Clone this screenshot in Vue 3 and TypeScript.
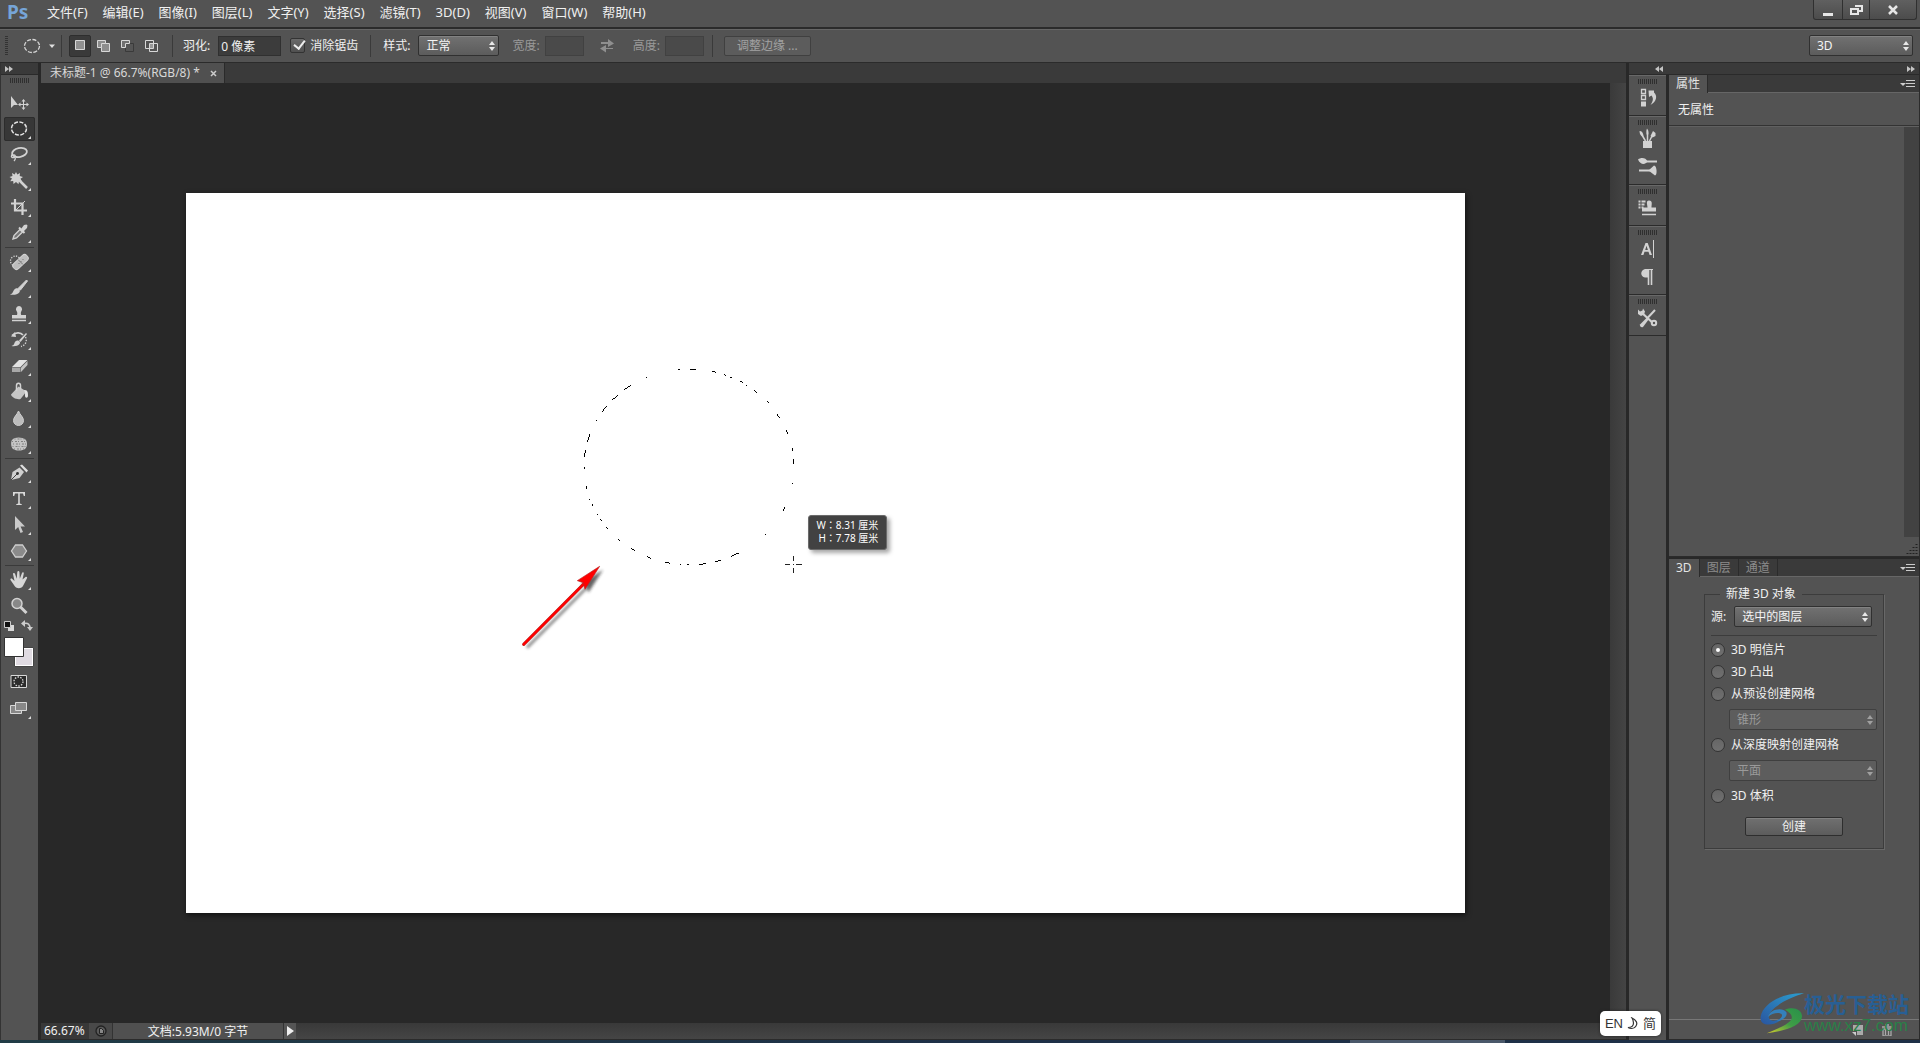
<script setup lang="ts">
import { ref } from 'vue'

interface Tool {
  name: string
  svg: string
  flyout: boolean
}

const menus: string[] = ['文件(F)', '编辑(E)', '图像(I)', '图层(L)', '文字(Y)', '选择(S)', '滤镜(T)', '3D(D)', '视图(V)', '窗口(W)', '帮助(H)']

const L = '#d2d2d2'
const tool = (name: string, svg: string, flyout = true): Tool => ({ name, svg, flyout })

const toolGroups: Tool[][] = [
  [
    tool('移动', `<path d="M7 5v12l3-3h4z" fill="${L}"/><path d="M19.500 9v9M15 13.500h9" stroke="${L}"/><path d="M17.500 10.500l2-2.500 2 2.500zM17.500 16.500l2 2.500 2-2.500zM16.500 11.500L14 13.500l2.500 2zM22.500 11.500l2.500 2-2.500 2z" fill="${L}"/>`, false),
    tool('椭圆选框', `<ellipse cx="15" cy="11.500" rx="7.500" ry="6.500" fill="none" stroke="#e4e4e4" stroke-width="1.500" stroke-dasharray="4 1.500"/>`),
    tool('套索', `<ellipse cx="15.500" cy="9.500" rx="7.500" ry="4.500" transform="rotate(-12 15.500 9.500)" fill="none" stroke="${L}" stroke-width="1.800"/><path d="M9 11c-2.500 1.500-2 4 .5 3.500s2-3 0-2.500M10 14c2 1 1.500 2.500 0 4" fill="none" stroke="${L}" stroke-width="1.300"/>`),
    tool('魔棒', `<path d="M15 11l8 8" stroke="${L}" stroke-width="2.500"/><path d="M12 3l1.300 2.500L16 4l-.3 3L19 8l-2.500 1.700L18 12.500l-3-.2-.5 3L12 13l-2.500 2-.3-3-3 .3L8 9.500 5.500 8l3-1L8 4l2.700 1.500z" fill="${L}"/>`),
    tool('裁剪', `<path d="M11 4v11.500h12M7 8.500h11.500V20" fill="none" stroke="${L}" stroke-width="2.200"/><path d="M12 15l9-9" stroke="${L}" stroke-width="1"/>`),
    tool('吸管', `<path d="M9 18l1-3.500 6-6 2.500 2.500-6 6z" fill="#777" stroke="${L}" stroke-width="1.400"/><path d="M15 6.500l5.500 5.500" stroke="${L}" stroke-width="2"/><path d="M17 8l3-4 2.500-.5 1 1-.5 2.500-3.500 3.500z" fill="${L}"/>`),
  ],
  [
    tool('污点修复', `<circle cx="11.500" cy="11" r="5" fill="none" stroke="${L}" stroke-width="1.300" stroke-dasharray="1.300 1.300"/><rect x="7.500" y="8.500" width="18" height="7" rx="3" transform="rotate(-43 16.500 12)" fill="#bdbdbd" stroke="${L}"/><path d="M14 9.500l5 5M14.500 13.500h1M16.500 11.500h1M18.500 9.500h1" stroke="#777"/>`),
    tool('画笔', `<path d="M14 12.500L22.500 4l1 1L16.500 14z" fill="${L}" stroke="${L}"/><path d="M14 12.500c2 .8 2.500 2.500 1.300 4C13.500 19 9 19 6 18.500c3-1 2.500-2.500 4-4.500 1-1.500 2.500-2 4-1.500z" fill="${L}"/>`),
    tool('仿制图章', `<path d="M15 4a3.200 3.200 0 0 1 2.500 5c-1 1.500-.7 3-.3 4H22v3.500H8V13h5c.4-1 .6-2.500-.5-4A3.200 3.200 0 0 1 15 4z" fill="${L}"/><path d="M8 18.500h14" stroke="${L}" stroke-width="1.500"/>`),
    tool('历史记录画笔', `<path d="M8 7.500c4-4 9-3 11-.5" fill="none" stroke="${L}" stroke-width="1.700"/><path d="M11 4L7 8.500l5 .5z" fill="${L}"/><path d="M21.500 9c2 4 0 8.500-4.500 9.500" fill="none" stroke="${L}" stroke-width="1.300" stroke-dasharray="1.500 1.300"/><path d="M15 12.500L22 5l1 1-6.500 8z" fill="${L}"/><path d="M14 12.500c2 .5 2.500 2 1.500 3.500-1.500 2-5 2.500-8 2 3-1 2.500-2.500 3.500-4 .8-1.200 2-1.700 3-1.500z" fill="${L}"/>`),
    tool('橡皮擦', `<path d="M8 13l7-7h8.500l-7 7z" fill="#e2e2e2"/><path d="M8 13.500h8.500V18H8z" fill="#a8a8a8"/><path d="M17 13.500l6.500-6.500v4L17 18z" fill="#c2c2c2"/>`),
    tool('油漆桶', `<path d="M7 14.500l7.500-8 8 5-6 7.500c-3.500 1-9-1.500-9.500-4.500z" fill="#c6c6c6"/><path d="M12.500 11V5.500c0-3 4-3 4 0v4" fill="none" stroke="${L}" stroke-width="1.500"/><path d="M20 10c4-.5 4 3 4 5.500 0 3-3 3-3 0 0-1.500.5-3-1-5.500z" fill="#e4e4e4"/>`),
    tool('模糊', `<path d="M14.500 5c1.500 4 5 6 5 9.500a5 5 0 0 1-10 0C9.500 11 13 9 14.500 5z" fill="#bdbdbd" stroke="#cfcfcf"/>`),
    tool('海绵', `<path d="M8 8c3-3.500 10-3 13.500-.5 2 2 2 7 0 9-3 3-11 2.500-13 0-1.500-2-2-6.500-.5-8.500z" fill="#c4c4c4"/><path d="M8 9.500h13M9 12h13M8.500 14.500h13M10 17h10M10.500 7h10" stroke="#808080" stroke-dasharray="1 2 2 1"/>`),
  ],
  [
    tool('钢笔', `<path d="M7 19l1.500-8 7-4.500 4.500 4.500-4.500 6z" fill="#cfcfcf"/><path d="M16 4.500l2-1 6 6-1.500 2z" fill="#dedede"/><path d="M7 19l6-6" stroke="#444"/><circle cx="13.500" cy="12.500" r="1.400" fill="#333"/>`),
    tool('横排文字', `<path d="M9 5h12v4h-1.200L19 6.500h-3.200v10l2 .8V18h-5.600v-.7l2-.8v-10H11L10.200 9H9z" fill="#dadada"/>`),
    tool('直接选择', `<path d="M11 3v14l3.200-3 2.300 6 2.500-1-2.400-5.500H21z" fill="#c9c9c9"/>`),
    tool('多边形', `<path d="M11.500 6h7l4 6-4 6h-7l-4-6z" fill="#8b8b8b" stroke="#cfcfcf" stroke-width="1.300"/>`),
  ],
  [
    tool('抓手', `<path d="M11 18.500L6.500 12c-.6-1.300 1-2 1.800-1l2.200 2L9 6c0-1.300 1.600-1.500 2-.3l1.700 5L13.300 4c.2-1.300 2-1.300 2.100 0l.4 6.700L18 5c.6-1.200 2-.6 1.800.6l-1.300 6L21.500 9c1-.7 2.100.3 1.500 1.300L19.500 17c-1.500 3.800-6.500 4-8.500 1.500z" fill="#d6d6d6"/>`),
    tool('缩放', `<circle cx="13" cy="9.500" r="5" fill="#888" stroke="${L}" stroke-width="1.500"/><path d="M16.500 13l6 6" stroke="${L}" stroke-width="3"/>`, false),
  ],
]

const dockGroups: Tool[][] = [
  [tool('历史记录', `<path d="M8.500 3.500h4v4h-4zM8.500 9.500h4v4h-4z" fill="none" stroke="${L}" stroke-width="1.300"/><path d="M8 15.500h5v5H8z" fill="${L}"/><path d="M15.500 4.500H21v2c3.500 3 3 9-3.500 12.500 3-4.500 3-7 1-9.500L16 11z" fill="${L}"/>`)],
  [
    tool('画笔预设', `<path d="M10 14h9v7h-9z" fill="${L}"/><path d="M12.500 14L9 8M14.500 14V6M16.500 14l3-6" stroke="${L}" stroke-width="1.500"/><path d="M6.500 4c2.500 0 4 2 4 5.500-2.500 0-4-2-4-5.500zM14 1.500c2 2 2 5.500.5 7.500-1.500-2-1.500-5.500-.5-7.500zM17.500 9l2.500-5 2.500 2v3l-3 1.500z" fill="${L}"/>`),
    tool('画笔', `<path d="M12 6.500h12M6 15.500h11" stroke="${L}" stroke-width="2"/><path d="M5 4.500c3-2.500 8-2 9.500 2-2.500 4-7.500 3-9.500-2zM15.500 15.500l5.500-5c3 0 3.500 10 1 10z" fill="${L}"/>`),
  ],
  [tool('仿制源', `<path d="M5.500 5.500h7M5.500 8.500h6M5.500 11.500h5" stroke="${L}" stroke-width="1.800" stroke-dasharray="2 1 9"/><path d="M16 4.500c4 0 2.500 4 2.500 7H23v4H9v-4h5.500c0-3-2-7 1.500-7z" fill="${L}"/><path d="M9 18.500h14" stroke="${L}" stroke-width="1.500"/>`)],
  [
    tool('字符', `<path d="M12.500 6h2.200l4.300 12h-2.400l-1.100-3.200h-4L10.400 18H8zM12.200 13h2.700l-1.400-4.200z" fill="${L}"/><path d="M20.500 3v18" stroke="${L}"/>`),
    tool('段落', `<path d="M18.500 4v16M15.500 4v16" stroke="${L}" stroke-width="1.600"/><path d="M20 4h-8c-5 1-5 8 0 8.500h3V5h5z" fill="${L}"/>`),
  ],
  [tool('工具预设', `<path d="M8 6l13 12" stroke="${L}" stroke-width="2.200"/><path d="M5 3.500l2 2 2.500-1 .5-2 2 3-1 3-3 1.500-3-2z" fill="${L}"/><circle cx="21" cy="17" r="2.200" fill="#535353" stroke="${L}" stroke-width="2"/><path d="M22 4l-7.500 8" stroke="${L}" stroke-width="2"/><path d="M14.500 11l1.500 2-6 8c-2 1-3.500-1-3-2.500z" fill="${L}"/>`)],
]

const selectionModes: Tool[] = [
  tool('新选区', `<path d="M3.500 2.500h9v9h-9z" fill="#909090" stroke="#d8d8d8"/>`),
  tool('添加到选区', `<path d="M1.500 2.500h8v3h4v8h-8v-4h-4z" fill="#8c8c8c" stroke="#d8d8d8"/><path d="M5.500 9.500v-4h4" fill="none" stroke="#d8d8d8"/>`),
  tool('从选区减去', `<path d="M5.500 5.500h8v8h-8z" fill="#555" stroke="#3a3a3a"/><path d="M9.500 2.500h-8v7h4v-4h4z" fill="#707070" stroke="#d8d8d8"/>`),
  tool('与选区交叉', `<path d="M1.500 2.500h8v8h-8zM5.500 5.500h8v8h-8z" fill="none" stroke="#d8d8d8"/><path d="M6 6h3v4H6z" fill="#999"/>`),
]

const activeTool = ref('椭圆选框')
const activeMode = ref('新选区')
const feather = ref('0 像素')
const antialias = ref(true)
const meshType = ref('postcard')

const marchingAnts =
  'M531 58h6M567 58h18M633 64l12 3M669 74l6 2M687 82h6M717 94l9 4M735 106h4M759 121l9 7M798 153l5 7M828 193l8 11M855 240l5 11M874 293v9M877 327v15M873 401h3M851 472l-4 10M792 553h3M713 609l-23 10M660 631l-18 4M614 641l-19 3M564 643h-6M540 643h-4M507 640l-15-4M450 626l-12-7M402 602l-12-7M356 571l-4-3M321 535l-5-3M302 512l-4-4M291 496l-3-5M275 469l-2-7M267 449l-3-3M257 418v-11M250 356v-6M250 321l4-21M260 275l6-22M286 214v-5M301 187l17-18M333 150l18-14M370 119l20-13M435 83h3'
</script>

<template>
  <div class="app">
    <header class="menubar">
      <span class="brand">Ps</span>
      <nav class="menus">
        <button v-for="m in menus" :key="m" type="button">{{ m }}</button>
      </nav>
      <div class="window-buttons">
        <button type="button" class="min" aria-label="最小化">
          <svg width="12" height="12"><path d="M1 9h10v3H1z" fill="#e6e6e6" /></svg>
        </button>
        <button type="button" class="restore" aria-label="还原">
          <svg width="13" height="12"><path d="M5 2h7v5H9M1 5h7v5H1z" fill="none" stroke="#e6e6e6" stroke-width="2" /></svg>
        </button>
        <button type="button" class="close" aria-label="关闭">
          <svg width="12" height="10"><path d="M2 1l8 8M10 1L2 9" stroke="#e6e6e6" stroke-width="2.500" /></svg>
        </button>
      </div>
    </header>

    <div class="options">
      <i class="grip-v"></i>
      <button type="button" class="preset" aria-label="工具预设">
        <svg width="34" height="16">
          <ellipse cx="9" cy="8" rx="7.500" ry="6.500" fill="none" stroke="#d8d8d8" stroke-width="1.300" stroke-dasharray="4 1.500" />
          <path d="M26 6.500h6L29 10z" fill="#e0e0e0" />
        </svg>
      </button>
      <i class="sep"></i>
      <div class="modes">
        <button
          v-for="m in selectionModes" :key="m.name" type="button" :aria-label="m.name"
          :class="{ on: activeMode === m.name }" @click="activeMode = m.name"
        >
          <svg width="16" height="16" v-html="m.svg"></svg>
        </button>
      </div>
      <i class="sep"></i>
      <label for="feather">羽化:</label>
      <input id="feather" v-model="feather" class="field feather" type="text" />
      <input id="aa" v-model="antialias" class="check" type="checkbox" />
      <label for="aa" class="aa-label">消除锯齿</label>
      <i class="sep"></i>
      <label for="style">样式:</label>
      <span class="select style-select">
        <select id="style"><option>正常</option></select>
        <svg width="6" height="10"><path d="M0 4l3-4 3 4zM0 6l3 4 3-4z" /></svg>
      </span>
      <label for="w" class="dim">宽度:</label>
      <input id="w" class="field size" type="text" disabled />
      <button type="button" class="swap" aria-label="交换宽高" disabled>
        <svg width="16" height="14"><path d="M2 3h7V0l6 4.500L9 8V5H2zM14 10H7v3.500L1 9.500 7 6v3h7z" fill="#8f8f8f" /></svg>
      </button>
      <label for="h" class="dim">高度:</label>
      <input id="h" class="field size" type="text" disabled />
      <i class="sep"></i>
      <button type="button" class="btn refine" disabled>调整边缘 ...</button>
      <span class="select workspace">
        <select aria-label="工作区"><option>3D</option></select>
        <svg width="6" height="10"><path d="M0 4l3-4 3 4zM0 6l3 4 3-4z" /></svg>
      </span>
    </div>

    <div class="main">
      <aside class="toolbar">
        <div class="strip">
          <svg width="8" height="6"><path d="M0 0l4 3-4 3zM4 0l4 3-4 3z" fill="#c4c4c4" /></svg>
        </div>
        <i class="grip-h"></i>
        <div v-for="(g, i) in toolGroups" :key="i" class="tool-group">
          <button
            v-for="t in g" :key="t.name" type="button" :aria-label="t.name"
            :class="{ on: activeTool === t.name }" @click="activeTool = t.name"
          >
            <svg width="30" height="24" v-html="t.svg + (t.flyout ? '<path d=\'M27 19v3h-3z\' fill=\'#ddd\'/>' : '')"></svg>
          </button>
        </div>
        <svg class="colors" width="31" height="48" role="img" aria-label="前景色和背景色">
          <path d="M4 5h6v6H4z" fill="#d8d8d8" />
          <path d="M.5 1.500h6v6h-6z" fill="#111" stroke="#ccc" />
          <path d="M20 3.500c4-1 6 1 6 5" fill="none" stroke="#ccc" stroke-width="1.500" />
          <path d="M21 0v7l-4-3.500zM23 7h6l-3 4z" fill="#ccc" />
          <path d="M10.500 27.500h19v19h-19z" fill="#fff" stroke="#444" />
          <path d="M12 29h16v16H12z" fill="#e0dbe2" />
          <path d="M.5 17.500h19v19H.5z" fill="#fff" stroke="#333" />
        </svg>
        <button type="button" class="mode-button" aria-label="快速蒙版">
          <svg width="30" height="24"><path d="M7 5.500h15.500v12H7z" fill="#2c2c2c" stroke="#d8d8d8" /><circle cx="14.500" cy="11.500" r="4.500" fill="none" stroke="#ddd" stroke-width="1.300" stroke-dasharray="1.500 1.300" /></svg>
        </button>
        <button type="button" class="mode-button" aria-label="屏幕模式">
          <svg width="30" height="24"><path d="M6.500 8.500h11v8h-11z" fill="#888" stroke="#d8d8d8" /><path d="M11.500 5.500h11v8h-11z" fill="#888" stroke="#d8d8d8" /><path d="M27 19v3h-3z" fill="#ddd" /></svg>
        </button>
      </aside>

      <section class="document">
        <div class="doc-tabs">
          <div class="doc-tab">
            <span>未标题-1 @ 66.7%(RGB/8) *</span>
            <button type="button" aria-label="关闭文档"><svg width="7" height="7"><path d="M1 1l5 5M6 1L1 6" stroke="#ccc" stroke-width="1.500" /></svg></button>
          </div>
        </div>
        <div class="viewport">
          <div class="canvas">
            <div class="paper">
              <svg class="drawing" viewBox="0 0 1280 720">
                <defs>
                  <filter id="soft" x="-20%" y="-20%" width="150%" height="150%"><feGaussianBlur stdDeviation="5" /></filter>
                </defs>
                <g transform="translate(315 157) scale(.33333)">
                  <path :d="marchingAnts" fill="none" stroke="#000" stroke-width="3" shape-rendering="crispEdges" />
                  <path d="M852 643h16M886 643h17M877 618v16M877 653v16M876 643h3" stroke="#222" stroke-width="3" shape-rendering="crispEdges" />
                  <g transform="translate(10 10)" opacity=".7" filter="url(#soft)">
                    <path d="M68 883L250 700" stroke="#444" stroke-width="8" /><path d="M296 649l-67 43 18 6 5 20z" fill="#222" />
                  </g>
                  <path d="M68 883L250 700" stroke="#a33" stroke-width="9" stroke-linecap="round" />
                  <path d="M68 883L250 700" stroke="#f00" stroke-width="7" stroke-linecap="round" />
                  <path d="M296 649l-67 43 18 6 5 20z" fill="#f00" stroke="#b22" stroke-width="2" />
                </g>
              </svg>
              <div class="size-tip"><span>W：8.31 厘米</span><span>H：7.78 厘米</span></div>
            </div>
          </div>
          <div class="scroll-v"></div>
        </div>
        <footer class="status">
          <input class="zoom-level" aria-label="缩放比例" value="66.67%" />
          <span class="proof">
            <svg width="12" height="12"><circle cx="6" cy="6" r="5" fill="#5a5a5a" stroke="#222" stroke-width="1.300" /><path d="M4.500 8.500v-5h2l2 2v3z" fill="#888" stroke="#222" /></svg>
          </span>
          <span class="doc-size">文档:5.93M/0 字节</span>
          <button type="button" class="more" aria-label="状态选项"><svg width="7" height="10"><path d="M0 0l7 5-7 5z" fill="#eee" /></svg></button>
        </footer>
      </section>

      <aside class="side">
        <div class="strip side-strip">
          <svg width="8" height="6"><path d="M4 0L0 3l4 3zM8 0L4 3l4 3z" fill="#c4c4c4" /></svg>
          <svg width="8" height="6"><path d="M0 0l4 3-4 3zM4 0l4 3-4 3z" fill="#c4c4c4" /></svg>
        </div>
        <div class="side-body">
          <div class="dock">
            <div v-for="(g, i) in dockGroups" :key="i" class="dock-group">
              <i class="grip-h"></i>
              <button v-for="t in g" :key="t.name" type="button" :aria-label="t.name">
                <svg width="30" height="24" v-html="t.svg"></svg>
              </button>
            </div>
          </div>
          <div class="panels">
            <section class="panel">
              <div class="tabs">
                <button type="button" class="on">属性</button>
                <svg class="panel-menu" width="15" height="9"><path d="M0 3h6L3 6z" fill="#ccc" /><path d="M6 .5h9M6 3.500h9M6 6.500h9" stroke="#ccc" /></svg>
              </div>
              <p class="no-props">无属性</p>
              <div class="props-body">
                <div class="props-scroll"></div>
                <svg class="resize" width="12" height="12"><path d="M10.500 1v10M7.500 4v7M4.500 7v4M1.500 10v1" stroke="#222" stroke-dasharray="1 2" stroke-width="2" /></svg>
              </div>
            </section>
            <section class="panel panel-3d">
              <div class="tabs">
                <button type="button" class="on">3D</button>
                <button type="button">图层</button>
                <button type="button">通道</button>
                <svg class="panel-menu" width="15" height="9"><path d="M0 3h6L3 6z" fill="#ccc" /><path d="M6 .5h9M6 3.500h9M6 6.500h9" stroke="#ccc" /></svg>
              </div>
              <form class="form-3d" @submit.prevent>
                <fieldset>
                  <legend>新建 3D 对象</legend>
                  <div class="source">
                    <label for="src">源:</label>
                    <span class="select">
                      <select id="src"><option>选中的图层</option></select>
                      <svg width="6" height="10"><path d="M0 4l3-4 3 4zM0 6l3 4 3-4z" /></svg>
                    </span>
                  </div>
                  <label class="radio"><input v-model="meshType" type="radio" name="mesh" value="postcard" />3D 明信片</label>
                  <label class="radio"><input v-model="meshType" type="radio" name="mesh" value="extrude" />3D 凸出</label>
                  <label class="radio"><input v-model="meshType" type="radio" name="mesh" value="preset" />从预设创建网格</label>
                  <span class="select sub">
                    <select aria-label="预设网格" disabled><option>锥形</option></select>
                    <svg width="6" height="10"><path d="M0 4l3-4 3 4zM0 6l3 4 3-4z" /></svg>
                  </span>
                  <label class="radio"><input v-model="meshType" type="radio" name="mesh" value="depth" />从深度映射创建网格</label>
                  <span class="select sub">
                    <select aria-label="深度映射网格" disabled><option>平面</option></select>
                    <svg width="6" height="10"><path d="M0 4l3-4 3 4zM0 6l3 4 3-4z" /></svg>
                  </span>
                  <label class="radio"><input v-model="meshType" type="radio" name="mesh" value="volume" />3D 体积</label>
                  <button type="submit" class="btn create">创建</button>
                </fieldset>
              </form>
              <div class="panel-foot">
                <svg width="12" height="12"><path d="M1 1h10v10H5V7H1z" fill="#aaa" /><path d="M0 8h4v4z" fill="#ccc" /></svg>
                <svg width="12" height="12"><path d="M1 3h10M4 1h4M2 5h8v7H2zM4.500 5v6M7.500 5v6" fill="none" stroke="#aaa" stroke-width="1.300" /></svg>
              </div>
            </section>
          </div>
        </div>
      </aside>
    </div>
    <div class="desktop"><i></i></div>

    <div class="ime">
      <span>EN</span>
      <svg width="12" height="13"><path d="M5 1c4 2 6 5 4 8-1.500 2.500-5 3-8 1.500 3.500 0 5.500-1.500 5.500-4.500C6.500 4 6 2.500 5 1z" fill="#fff" stroke="#333" stroke-width="1.200" /></svg>
      <span>简</span>
    </div>
    <div class="watermark">
      <svg width="44" height="42" viewBox="0 0 130 124">
        <defs>
          <linearGradient id="blue" x1="0" y1="1" x2="1" y2="0"><stop offset="0" stop-color="#2a559f" /><stop offset="1" stop-color="#2b9fd0" /></linearGradient>
          <linearGradient id="green" x1="0" y1="1" x2="1" y2="0"><stop offset="0" stop-color="#d8cf2c" /><stop offset=".5" stop-color="#3f9c46" /><stop offset="1" stop-color="#28914a" /></linearGradient>
        </defs>
        <path d="M130 4C70 2 10 30 2 72c-2 15 5 22 18 24 24 2 45-12 52-28C60 84 30 92 26 76 22 54 70 22 130 4z" fill="url(#blue)" />
        <path d="M24 74c4-24 44-30 54-14 4 12-12 26-28 26 10-6 18-14 14-20-6-8-30-4-40 8z" fill="#3480bb" />
        <path d="M74 52c24-10 48-2 50 18 2 30-54 46-104 52 30-14 72-28 74-46 0-12-10-16-20-24z" fill="url(#green)" />
      </svg>
      <div><strong>极光下载站</strong><a href="#">www.xz7.com</a></div>
    </div>
  </div>
</template>

<style>
body {
  margin: 0;
  background: #282828;
}
</style>

<style scoped>
* {
  box-sizing: border-box;
}
.app {
  position: relative;
  display: flex;
  flex-direction: column;
  height: 100vh;
  overflow: hidden;
  color: #f0f0f0;
  background: #282828;
  font: 12px/16px "Noto Sans", "Noto Sans CJK SC", sans-serif;
}
button,
input,
select {
  margin: 0;
  padding: 0;
  border: 0;
  color: inherit;
  background: none;
  font: inherit;
  border-radius: 0;
}
svg {
  display: block;
  flex: none;
}

/* menu bar */
.menubar {
  display: flex;
  flex: none;
  height: 29px;
  background: #535353;
  border-bottom: 2px solid #2b2b2b;
}
.brand {
  width: 47px;
  padding-left: 7px;
  color: #76a5d8;
  font-size: 19px;
  font-weight: 700;
  line-height: 25px;
}
.menus {
  display: flex;
  align-items: flex-start;
  gap: 15px;
  font-size: 13px;
}
.menus button {
  line-height: 24px;
}
.window-buttons {
  display: flex;
  height: 20px;
  margin-left: auto;
  margin-right: 3px;
  border: 1px solid #303030;
  border-top: 0;
  border-radius: 0 0 3px 3px;
  background: linear-gradient(#606060, #4c4c4c);
}
.window-buttons button {
  display: flex;
  justify-content: center;
  align-items: center;
  width: 28px;
}
.window-buttons .restore {
  border: solid #303030;
  border-width: 0 1px;
}
.window-buttons .close {
  width: 46px;
}

/* options bar */
.options {
  display: flex;
  flex: none;
  align-items: center;
  height: 34px;
  padding: 0 7px 1px 5px;
  background: #535353;
  border-top: 1px solid #666;
  border-bottom: 1px solid #2b2b2b;
}
.options label {
  margin-right: 8px;
}
.options .dim {
  color: #9a9a9a;
  margin-right: 5px;
}
.grip-v {
  width: 3px;
  height: 20px;
  background: repeating-linear-gradient(#333 0 1px, #535353 1px 2px);
}
.preset {
  margin: 0 4px 0 15px;
}
.sep {
  width: 1px;
  height: 22px;
  background: #3a3a3a;
}
.modes {
  display: flex;
  gap: 2px;
  margin: 0 9px 0 7px;
}
.modes button {
  display: flex;
  align-items: center;
  justify-content: center;
  width: 22px;
  height: 22px;
  border-radius: 2px;
}
.modes .on {
  background: #3a3a3a;
  border: 1px solid #2e2e2e;
}
.modes + .sep {
  margin-right: 10px;
}
.field {
  height: 20px;
  border: 1px solid #303030;
  background: #3c3c3c;
}
.field:disabled {
  border-color: #414141;
  background: #4a4a4a;
}
.feather {
  width: 63px;
  padding-left: 2px;
  margin-right: 9px;
}
.check {
  appearance: none;
  width: 15px;
  height: 15px;
  margin-right: 5px;
  border: 1px solid #333;
  border-radius: 2px;
  background: linear-gradient(#6a6a6a, #505050);
}
.check:checked::after {
  content: "";
  display: block;
  width: 5px;
  height: 9px;
  margin: -1px 0 0 5px;
  border: solid #eee;
  border-width: 0 2px 2px 0;
  transform: rotate(38deg);
}
.options .aa-label {
  margin-right: 12px;
}
.aa-label + .sep {
  margin-right: 12px;
}
.select {
  position: relative;
  display: block;
}
.select select {
  display: block;
  appearance: none;
  width: 100%;
  height: 21px;
  padding: 0 7px;
  border: 1px solid #303030;
  border-radius: 2px;
  background: linear-gradient(#717171, #5c5c5c);
  box-shadow: inset 0 1px #828282;
  color: #f4f4f4;
}
.select svg {
  position: absolute;
  right: 4px;
  top: 6px;
  fill: #e8e8e8;
  pointer-events: none;
}
.select select:disabled {
  opacity: 1;
  color: #9a9a9a;
  border-color: #3f3f3f;
  background: #5d5d5d;
  box-shadow: none;
}
.select select:disabled + svg {
  fill: #a0a0a0;
}
.style-select {
  width: 81px;
  margin-right: 13px;
}
.size {
  width: 39px;
}
.swap {
  margin: 0 18px 0 15px;
}
.size + .sep {
  margin-left: 8px;
  margin-right: 11px;
}
.btn {
  border: 1px solid #2e2e2e;
  border-radius: 2px;
  background: linear-gradient(#707070, #5c5c5c);
  box-shadow: inset 0 1px #808080;
}
.refine {
  width: 87px;
  height: 20px;
  line-height: 16px;
}
.btn:disabled {
  color: #a2a2a2;
  border-color: #404040;
  background: #5c5c5c;
  box-shadow: none;
}
.workspace {
  width: 104px;
  margin-left: auto;
}

/* main area */
.main {
  display: flex;
  flex: 1;
  min-height: 0;
}
.strip {
  display: flex;
  flex: none;
  align-items: center;
  height: 12px;
  padding-left: 4px;
  background: #3a3a3a;
  border-bottom: 1px solid #2a2a2a;
}
.side-strip {
  justify-content: space-between;
  padding: 0 4px 0 26px;
}
.grip-h {
  display: block;
  width: 19px;
  height: 5px;
  background: repeating-linear-gradient(90deg, #2f2f2f 0 1px, #535353 1px 2px);
}
.toolbar {
  width: 38px;
  flex: none;
  background: #535353;
  border-left: 1px solid #333;
}
.toolbar .grip-h {
  margin: 3px 9px 7px;
}
.tool-group {
  display: flex;
  flex-direction: column;
  padding: 0 3px;
}
.tool-group + .tool-group::before {
  content: "";
  height: 1px;
  margin: 1px;
  background: #3a3a3a;
}
.tool-group button {
  width: 31px;
  height: 24px;
  margin: 1px 0;
  border-radius: 2px;
}
.tool-group .on {
  background: #373737;
  outline: 1px solid #2c2c2c;
  outline-offset: -1px;
}
.colors {
  margin: 1px 3px 0;
}
.mode-button {
  display: block;
  margin: 2px 3px 3px;
}

.document {
  display: flex;
  flex-direction: column;
  flex: 1;
  min-width: 0;
  margin: 0 3px;
}
.doc-tabs {
  display: flex;
  flex: none;
  height: 20px;
  background: #3a3a3a;
}
.doc-tab {
  display: flex;
  align-items: center;
  gap: 10px;
  padding: 0 7px 0 9px;
  border-right: 1px solid #2a2a2a;
  background: #505050;
  color: #d8d8d8;
  line-height: 20px;
}
.viewport {
  display: flex;
  flex: 1;
  min-height: 0;
}
.canvas {
  display: flex;
  flex: 1;
  align-items: center;
  justify-content: center;
  background: #282828;
}
.paper {
  position: relative;
  width: 81.58%;
  aspect-ratio: 16 / 9;
  background: #fff;
  box-shadow: 1px 2px 5px #111;
}
.drawing {
  width: 100%;
  height: 100%;
}
.size-tip {
  position: absolute;
  left: 48.6%;
  top: 44.7%;
  display: flex;
  flex-direction: column;
  align-items: flex-end;
  padding: 3px 8px 4px;
  border: 1px solid #6a6a6a;
  border-radius: 3px;
  background: #424242;
  box-shadow: 3px 3px 4px rgba(0, 0, 0, 0.35);
  color: #fff;
  font-family: "Noto Sans", "Noto Sans CJK TC", sans-serif;
  font-size: 10px;
  line-height: 13px;
  white-space: nowrap;
}
.scroll-v {
  width: 16px;
  background: linear-gradient(90deg, #3a3a3a, #444);
}
.status {
  display: flex;
  flex: none;
  height: 17px;
  background: linear-gradient(#393939, #454545);
  border-bottom: 1px solid #2b2b2b;
  line-height: 18px;
}
.zoom-level {
  width: 48px;
  padding-left: 3px;
  background: #383838;
}
.proof {
  display: flex;
  align-items: center;
  justify-content: center;
  width: 24px;
  background: #494949;
  border-right: 1px solid #333;
}
.doc-size {
  width: 170px;
  background: #505050;
  text-align: center;
}
.more {
  width: 13px;
  padding-left: 3px;
  border-left: 1px solid #333;
  background: #555;
}

/* side dock and panels */
.side {
  display: flex;
  flex-direction: column;
  flex: none;
  width: 291px;
  border-right: 1px solid #2b2b2b;
}
.side-body {
  display: flex;
  flex: 1;
  min-height: 0;
}
.dock {
  width: 37px;
  margin-right: 3px;
  background: #535353;
}
.dock-group {
  padding: 3px 3px 3px 4px;
  border-top: 1px solid #686868;
  border-bottom: 1px solid #2b2b2b;
}
.dock-group .grip-h {
  margin: 0 5px;
}
.dock-group button {
  display: block;
  height: 28px;
}
.panels {
  display: flex;
  flex-direction: column;
  flex: 1;
  gap: 2px;
}
.panel {
  display: flex;
  flex-direction: column;
  height: 482px;
  background: #535353;
  border-bottom: 1px solid #2b2b2b;
}
.panel-3d {
  flex: 1;
}
.tabs {
  display: flex;
  flex: none;
  height: 18px;
  background: #3a3a3a;
  border-bottom: 1px solid #666;
}
.tabs button {
  height: 17px;
  padding: 0 7px;
  border-right: 1px solid #2b2b2b;
  color: #8c8c8c;
  line-height: 16px;
}
.tabs .on {
  height: 18px;
  background: #535353;
  color: #e4e4e4;
}
.panel-menu {
  margin: 5px 4px 0 auto;
}
.no-props {
  margin: 0;
  padding-left: 9px;
  height: 33px;
  line-height: 34px;
  border-bottom: 1px solid #333;
}
.props-body {
  display: flex;
  flex-direction: column;
  align-items: flex-end;
  flex: 1;
  border-top: 1px solid #606060;
}
.props-scroll {
  flex: 1;
  width: 15px;
  background: #424242;
}
.resize {
  margin: 6px 1px 1px;
}
.form-3d {
  flex: 1;
  padding-top: 9px;
}
fieldset {
  width: 180px;
  margin: 0 auto;
  padding: 4px 6px 12px;
  border: 1px solid #3c3c3c;
  box-shadow: 1px 1px #686868;
}
legend {
  margin-left: 9px;
  padding: 0 6px;
}
.source {
  display: flex;
  align-items: center;
  gap: 8px;
  padding-bottom: 8px;
  margin-bottom: 3px;
  border-bottom: 1px solid #3c3c3c;
}
.source .select {
  flex: 1;
  margin-right: 5px;
}
.radio {
  display: flex;
  align-items: center;
  gap: 6px;
  height: 22px;
}
.radio input {
  appearance: none;
  display: flex;
  align-items: center;
  justify-content: center;
  width: 14px;
  height: 14px;
  border: 1px solid #333;
  border-radius: 50%;
  background: linear-gradient(#666, #707070);
}
.radio input:checked::after {
  content: "";
  width: 4px;
  height: 4px;
  border-radius: 50%;
  background: #fff;
}
.sub {
  margin: 4px 0 4px 18px;
}
.create {
  display: block;
  width: 98px;
  height: 19px;
  margin: 10px auto 0;
  line-height: 16px;
}
.panel-foot {
  display: flex;
  justify-content: flex-end;
  align-items: center;
  gap: 17px;
  height: 20px;
  padding-right: 26px;
  border-top: 1px solid #777;
}
.desktop {
  flex: none;
  height: 3px;
  background: linear-gradient(90deg, #213c46, #1e3047 50%);
}
.desktop i {
  display: block;
  width: 155px;
  height: 3px;
  margin-left: 70.3%;
  background: #4a586a;
}

/* floating input-method badge and site mark */
.ime {
  position: absolute;
  right: 259px;
  bottom: 7px;
  display: flex;
  align-items: center;
  gap: 4px;
  height: 25px;
  padding: 0 5px;
  border-radius: 5px;
  background: #fff;
  box-shadow: 0 0 3px #222;
  color: #333;
  font-family: "Liberation Sans", "Noto Sans CJK SC", sans-serif;
  font-size: 13px;
}
.watermark {
  position: absolute;
  right: 11px;
  bottom: 7px;
  display: flex;
}
.watermark div {
  display: flex;
  flex-direction: column;
}
.watermark strong {
  color: #285f94;
  font-size: 21px;
  line-height: 24px;
}
.watermark a {
  color: #2a8048;
  font: 17px/20px "Liberation Sans", sans-serif;
  text-decoration: none;
}
</style>
